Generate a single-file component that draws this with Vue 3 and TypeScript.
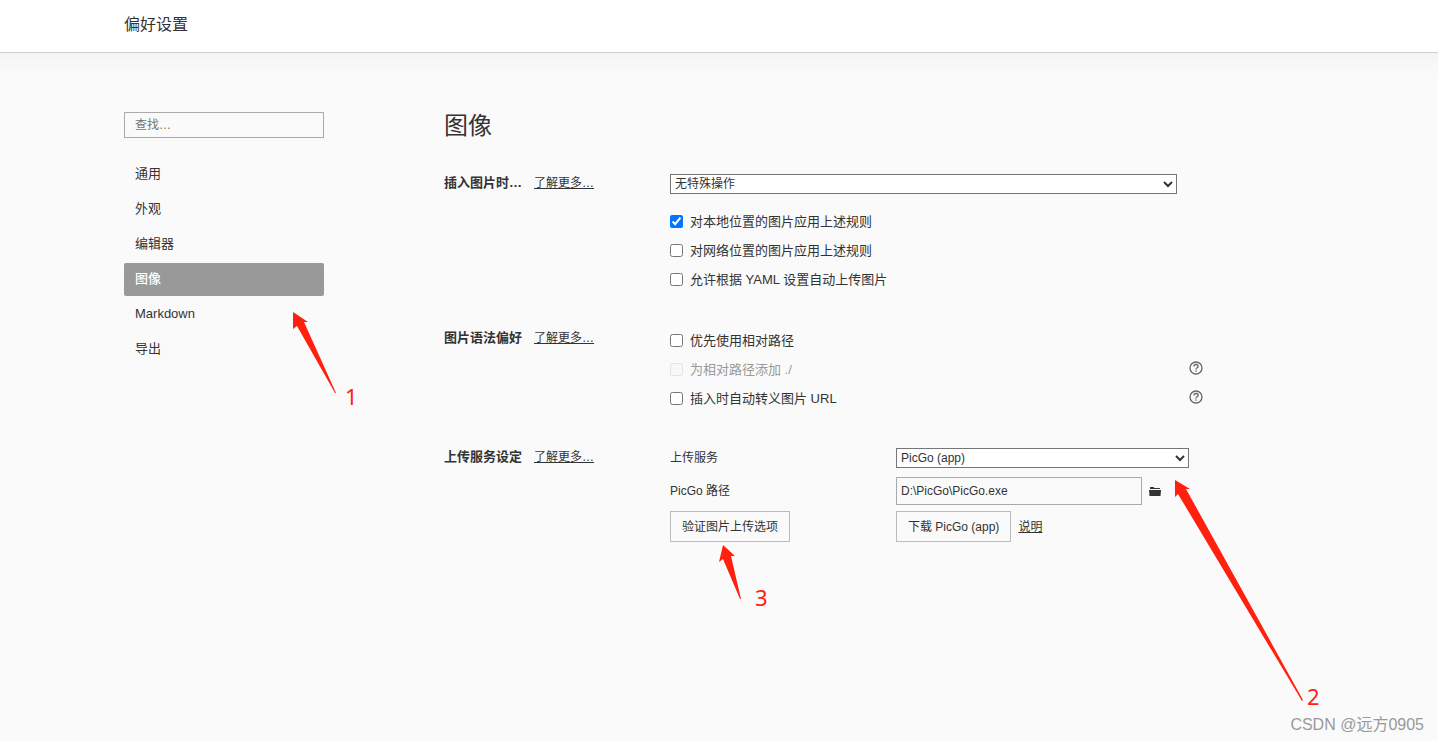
<script setup lang="ts">
import { ref } from 'vue'

interface RuleOption {
  id: string
  label: string
  checked: boolean
  disabled?: boolean
  hint?: boolean
}

interface Marker {
  label: string
  x: number
  y: number
  points: string
}

const navItems: string[] = ['通用', '外观', '编辑器', '图像', 'Markdown', '导出']
const activeItem = ref('图像')
const query = ref('')
const insertAction = ref('无特殊操作')
const uploader = ref('PicGo (app)')
const uploaderPath = ref('D:\\PicGo\\PicGo.exe')

const insertRules = ref<RuleOption[]>([
  { id: 'local', label: '对本地位置的图片应用上述规则', checked: true },
  { id: 'online', label: '对网络位置的图片应用上述规则', checked: false },
  { id: 'yaml', label: '允许根据 YAML 设置自动上传图片', checked: false },
])

const syntaxRules = ref<RuleOption[]>([
  { id: 'relative', label: '优先使用相对路径', checked: false },
  { id: 'dot-slash', label: '为相对路径添加 ./', checked: false, disabled: true, hint: true },
  { id: 'escape', label: '插入时自动转义图片 URL', checked: false, hint: true },
])

const markers: Marker[] = [
  { label: '1', x: 221, y: 352, points: '169,259 184,269 180,269 212,340 211,340 173,273 169,276' },
  { label: '2', x: 1183, y: 652, points: '1051,427 1066,436 1062,436 1179,647 1178,648 1054,441 1051,444' },
  { label: '3', x: 631, y: 553, points: '599,492 611,503 607,503 617,546 616,546 599,506 595,509' },
]
</script>

<template>
  <div class="page">
    <header class="topbar">
      <h1 class="topbar-title">偏好设置</h1>
    </header>

    <div class="body">
      <div class="container">
        <aside class="sidebar">
          <input v-model="query" class="search" type="text" placeholder="查找…" aria-label="查找" />
          <nav class="nav">
            <button
              v-for="item in navItems"
              :key="item"
              type="button"
              class="nav-item"
              :class="{ active: item === activeItem }"
              @click="activeItem = item"
            >{{ item }}</button>
          </nav>
        </aside>

        <main class="main">
          <h2 class="title">图像</h2>

          <section class="group">
            <div class="group-head">
              <h3 class="group-name">插入图片时…</h3>
              <a class="more" href="#">了解更多…</a>
            </div>
            <div class="group-body">
              <select v-model="insertAction" class="select action" aria-label="插入图片时">
                <option>无特殊操作</option>
              </select>
              <div class="rules">
                <div v-for="rule in insertRules" :key="rule.id" class="rule">
                  <input :id="rule.id" v-model="rule.checked" class="check" type="checkbox" />
                  <label :for="rule.id">{{ rule.label }}</label>
                </div>
              </div>
            </div>
          </section>

          <section class="group">
            <div class="group-head">
              <h3 class="group-name">图片语法偏好</h3>
              <a class="more" href="#">了解更多…</a>
            </div>
            <div class="group-body checks-only">
              <div class="rules">
                <div v-for="rule in syntaxRules" :key="rule.id" class="rule">
                  <input
                    :id="rule.id"
                    v-model="rule.checked"
                    class="check"
                    type="checkbox"
                    :disabled="rule.disabled"
                  />
                  <label :for="rule.id" :class="{ muted: rule.disabled }">{{ rule.label }}</label>
                  <svg v-if="rule.hint" class="hint" width="14" height="14" viewBox="0 0 14 14" aria-hidden="true">
                    <circle cx="7" cy="7" r="6" fill="none" stroke="#666" stroke-width="1.3" />
                    <path d="M4.9 5.6C4.9 4.3 5.8 3.5 7 3.5s2.1.7 2.1 1.9c0 1.4-2.1 1.5-2.1 3.1" fill="none" stroke="#666" stroke-width="1.3" />
                    <rect x="6.3" y="9.4" width="1.4" height="1.3" fill="#666" />
                  </svg>
                </div>
              </div>
            </div>
          </section>

          <section class="group">
            <div class="group-head">
              <h3 class="group-name">上传服务设定</h3>
              <a class="more" href="#">了解更多…</a>
            </div>
            <div class="group-body upload">
              <label class="top" for="uploader">上传服务</label>
              <select id="uploader" v-model="uploader" class="select top">
                <option>PicGo (app)</option>
              </select>
              <label for="uploader-path">PicGo 路径</label>
              <div class="path-row">
                <input id="uploader-path" v-model="uploaderPath" class="path" type="text" />
                <button type="button" class="browse" aria-label="浏览">
                  <svg width="12" height="11" viewBox="0 0 12 11" aria-hidden="true">
                    <path d="M1 3V1.4Q1 1 1.4 1H4.6L5.4 2H10.6Q11 2 11 2.4V3Z" fill="#333" />
                    <path d="M0 4H12L11.5 10H.5Z" fill="#333" />
                  </svg>
                </button>
              </div>
              <div>
                <button type="button" class="btn">验证图片上传选项</button>
              </div>
              <div class="download-row">
                <button type="button" class="btn">下载 PicGo (app)</button>
                <a class="more" href="#">说明</a>
              </div>
            </div>
          </section>
        </main>

        <svg class="markers" aria-hidden="true">
          <g v-for="marker in markers" :key="marker.label">
            <polygon :points="marker.points" />
            <text :x="marker.x" :y="marker.y">{{ marker.label }}</text>
          </g>
        </svg>
      </div>
    </div>

    <div class="watermark">CSDN @远方0905</div>
  </div>
</template>

<style>
body {
  margin: 0;
  background: #fafafa;
}
</style>

<style scoped>
.page {
  position: relative;
  min-height: 100vh;
  box-sizing: border-box;
  background: #fafafa;
  color: #333;
  font: 13px/20px "Liberation Sans", "Noto Sans CJK SC", sans-serif;
}

.page *,
.page *::before {
  box-sizing: border-box;
}

button,
input,
select {
  margin: 0;
  font-family: inherit;
  color: inherit;
}

.topbar {
  height: 53px;
  padding: 13px max(20px, calc((100% - 1190px) / 2));
  background: #fff;
  border-bottom: 1px solid #ccc;
}

.topbar-title {
  margin: 0;
  font-size: 16px;
  line-height: 24px;
  font-weight: 400;
}

.body {
  padding: 0 20px;
  background: linear-gradient(#f4f4f4, #fafafa 22px);
}

.container {
  position: relative;
  display: flex;
  gap: 120px;
  max-width: 1190px;
  margin: 0 auto;
  padding: 54px 0 100px;
}

.sidebar {
  flex: 0 0 200px;
  padding-top: 5px;
}

.search {
  display: block;
  width: 100%;
  height: 26px;
  padding: 0 10px;
  border: 1px solid #aaa;
  background: transparent;
  font-size: 12px;
}

.search::placeholder {
  color: #757575;
}

.nav {
  display: flex;
  flex-direction: column;
  gap: 2px;
  margin-top: 20px;
}

.nav-item {
  padding: 6px 11px 7px;
  border: 0;
  border-radius: 2px;
  background: none;
  font-size: 13px;
  line-height: 20px;
  text-align: left;
}

.nav-item.active {
  background: #999;
  color: #fff;
  font-weight: 500;
}

.main {
  flex: 1;
  min-width: 0;
}

.title {
  margin: 0 0 29px;
  padding-top: 1px;
  font-size: 24px;
  line-height: 36px;
  font-weight: 400;
}

.group {
  display: grid;
  grid-template-columns: 226px 1fr;
  margin-bottom: 38px;
}

.group-head {
  display: flex;
  align-items: baseline;
  gap: 12px;
  align-self: start;
}

.group-name {
  margin: 0;
  font-size: 13px;
  line-height: 20px;
  font-weight: 700;
}

.more {
  color: inherit;
  font-size: 12px;
  line-height: 20px;
  text-decoration: underline;
}

.group-body {
  padding-top: 1px;
}

.group-body.checks-only {
  padding-top: 2px;
}

.select {
  display: block;
  width: 100%;
  height: 20px;
  padding: 0;
  border: 1px solid #767676;
  border-radius: 0;
  background: #fff;
  font-size: 12px;
}

.action {
  max-width: 507px;
  margin-bottom: 17px;
}

.rules {
  display: flex;
  flex-direction: column;
  gap: 8px;
  max-width: 533px;
}

.rule {
  display: flex;
  align-items: center;
  gap: 7px;
  height: 21px;
}

.rule label {
  line-height: 21px;
}

.check {
  width: 13px;
  height: 13px;
}

.check:disabled {
  opacity: 0.5;
}

.muted {
  color: #999;
}

.hint {
  margin: 0 0 3px auto;
}

.upload {
  display: grid;
  grid-template-columns: 226px minmax(0, 293px);
  grid-template-rows: 23px 28px 31px;
  row-gap: 6px;
  align-items: center;
  font-size: 12px;
}

.top {
  align-self: start;
}

.path-row,
.download-row {
  display: flex;
  align-items: center;
  gap: 7px;
}

.path {
  flex: 0 1 246px;
  min-width: 0;
  height: 28px;
  padding: 0 4px;
  border: 1px solid #aaa;
  background: transparent;
  font-size: 12px;
}

.browse {
  display: flex;
  padding: 0;
  border: 0;
  background: none;
}

.btn {
  display: block;
  height: 31px;
  padding: 0 11px 2px;
  border: 1px solid #bbb;
  background: transparent;
  font-size: 12px;
  white-space: nowrap;
}

.markers {
  position: absolute;
  top: 0;
  left: 0;
  width: 100%;
  height: 100%;
  overflow: visible;
  pointer-events: none;
}

.markers polygon,
.markers text {
  fill: #ff2010;
}

.markers text {
  font: 22px "Noto Sans", sans-serif;
}

.watermark {
  position: absolute;
  right: 14px;
  bottom: 4px;
  color: #999;
  font-size: 16px;
  line-height: 24px;
}
</style>
